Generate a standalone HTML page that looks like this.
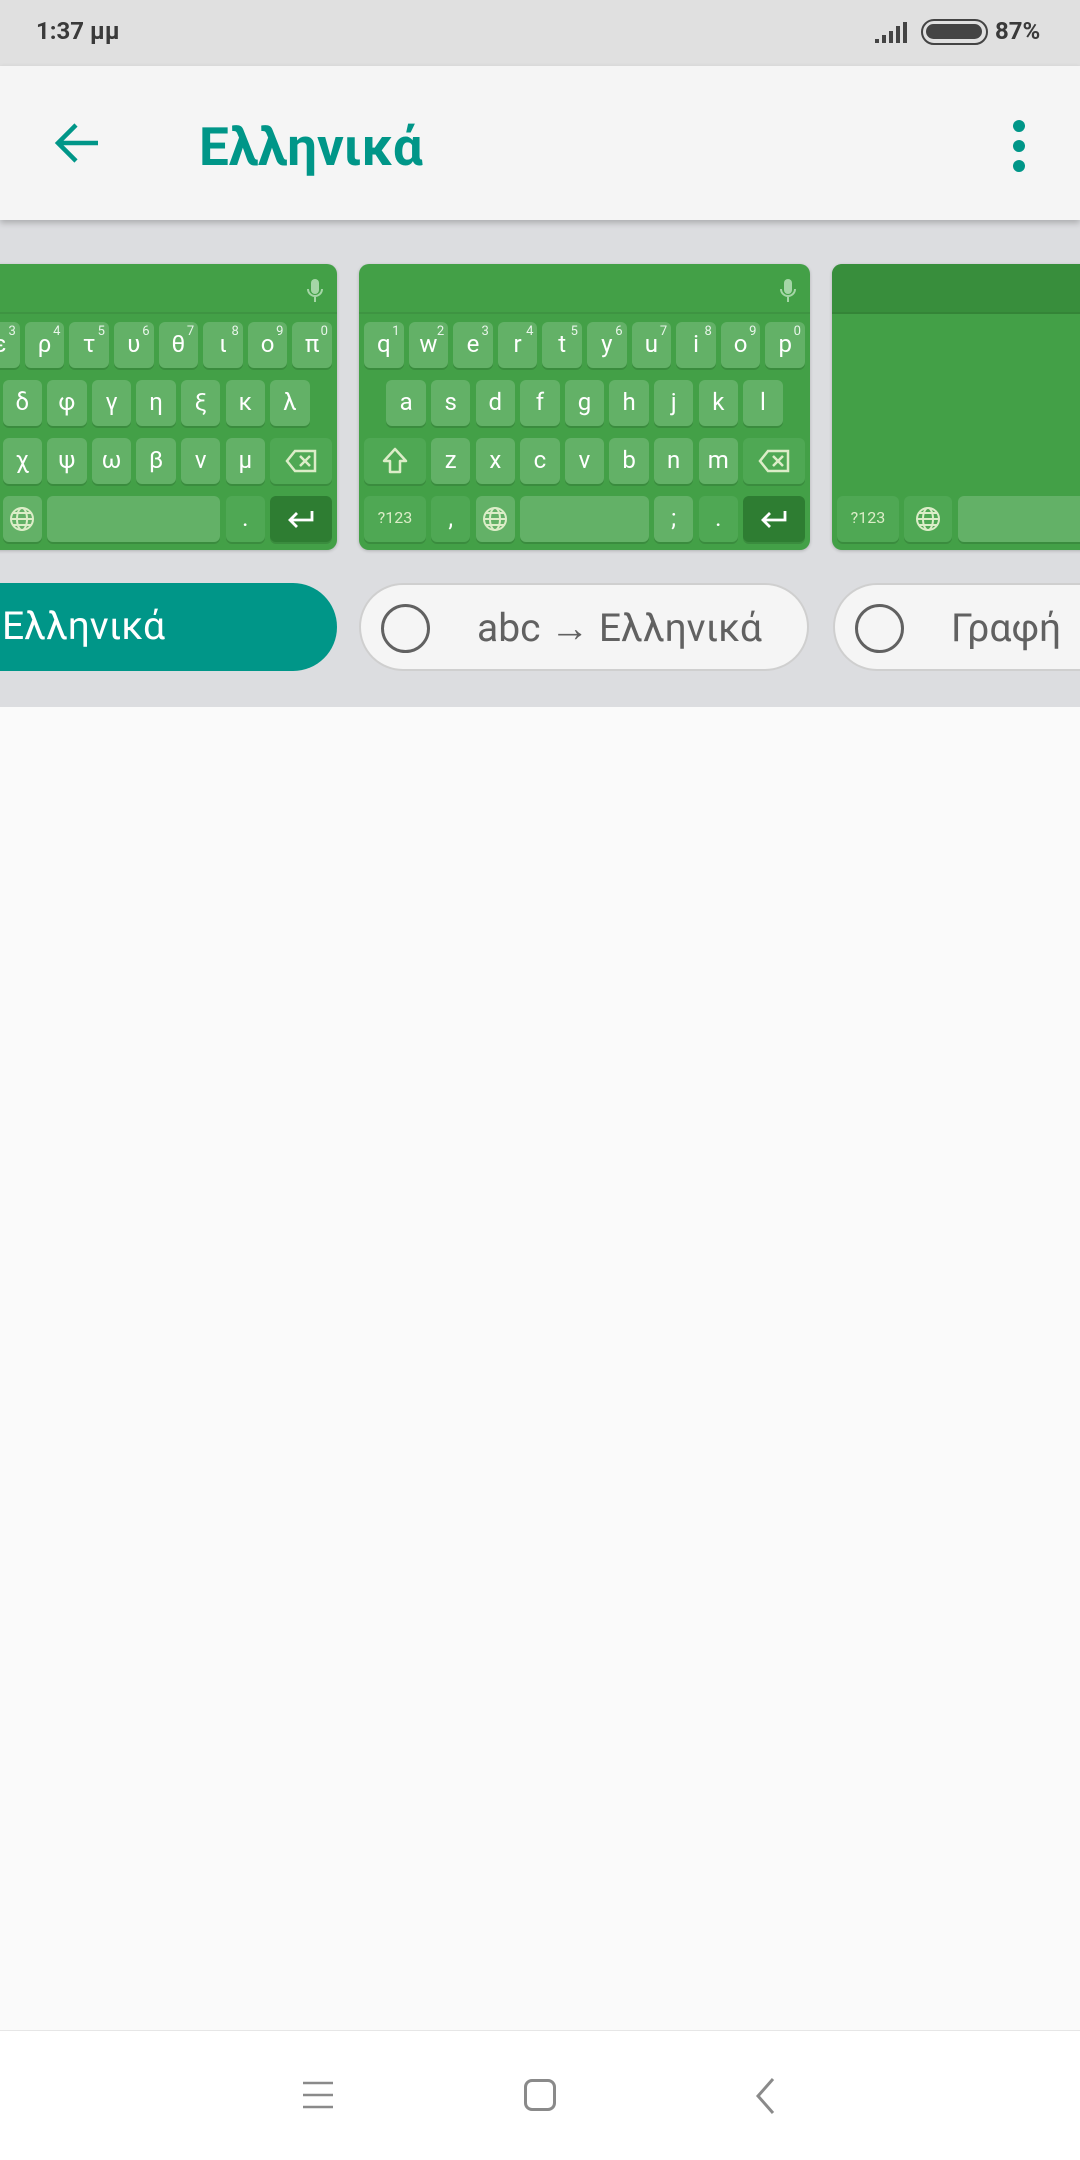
<!DOCTYPE html>
<html><head><meta charset="utf-8"><style>
*{margin:0;padding:0;box-sizing:border-box}
body{width:1080px;height:2160px;position:relative;overflow:hidden;background:#fafafa;font-family:"Roboto","Liberation Sans","DejaVu Sans",sans-serif}
.sb{position:absolute;left:0;top:0;width:1080px;height:66px;background:#e0e0e0}
.ab{position:absolute;left:0;top:66px;width:1080px;height:154px;background:#f5f5f5;box-shadow:0 3px 6px rgba(0,0,0,.22);z-index:2}
.gray{position:absolute;left:0;top:220px;width:1080px;height:487px;background:#dcdde0}
.card{position:absolute;top:264px;width:451px;height:286px;background:#43a047;border-radius:10px;overflow:hidden;box-shadow:0 1px 3px rgba(0,0,0,.2)}
.hd{position:absolute;left:0;top:0;width:100%;height:50px;border-bottom:2px solid rgba(0,0,0,.07)}
.k{position:absolute;left:calc(5px + var(--i)*44.6px);width:calc(var(--w,1)*44.6px - 5px);height:46px;border-radius:6px;background:#63b167;box-shadow:0 2px 0 rgba(0,0,0,.12);color:#fff;font-size:24px;text-align:center;line-height:44px}
.f{background:#4fa854}
.e{background:#2e7d32}
.r1{top:58px}.r2{top:116px}.r3{top:174px}.r4{top:232px}
.k sup{position:absolute;right:4px;top:-12px;font-size:13px;color:#e8f5e9}
.sm{font-size:16px;color:#dcedc8}
.chip{position:absolute;top:583px;height:88px;border-radius:44px;font-size:39px;line-height:86px;color:#616161}
.c2{background:#f5f5f5;border:2px solid #cfcfcf}
.circ{position:absolute;top:19px;width:49px;height:49px;border-radius:50%;border:3px solid #616161}
.nav{position:absolute;left:0;top:2030px;width:1080px;height:130px;background:#fff;border-top:1px solid #e6e6e6}
</style></head><body>
<div class="sb">
<div style="position:absolute;left:36px;top:17px;font-size:24px;font-weight:bold;color:#3a3a3a">1:37 μμ</div>
<svg style="position:absolute;left:874px;top:21px" width="36" height="24" viewBox="0 0 36 24"><g fill="#444"><rect x="1" y="18" width="4" height="4"/><rect x="8" y="14" width="4" height="8"/><rect x="15" y="10" width="4" height="12"/><rect x="22" y="5" width="4" height="17"/><rect x="29" y="1" width="4" height="21"/></g></svg>
<div style="position:absolute;left:921px;top:19px;width:67px;height:26px;border:2.5px solid #444;border-radius:13px"><div style="position:absolute;left:3px;top:3px;width:56px;height:15px;background:#444;border-radius:8px"></div></div>
<div style="position:absolute;left:995px;top:17px;font-size:24px;font-weight:bold;color:#3a3a3a">87%</div>
</div>
<div class="ab">
<svg style="position:absolute;left:52px;top:52px" width="50" height="50" viewBox="0 0 50 50"><path d="M46 25H8M24 7L6 25l18 18" fill="none" stroke="#009688" stroke-width="4.5"/></svg>
<div style="position:absolute;left:199px;top:50px;font-size:53px;font-weight:bold;color:#009688">Ελληνικά</div>
<div style="position:absolute;left:1013px;top:54px;width:12px;height:12px;border-radius:50%;background:#009688"></div>
<div style="position:absolute;left:1013px;top:74px;width:12px;height:12px;border-radius:50%;background:#009688"></div>
<div style="position:absolute;left:1013px;top:94px;width:12px;height:12px;border-radius:50%;background:#009688"></div>
</div>
<div class="gray"></div>

<!-- card 1 -->
<div class="card" style="left:-114px">
<div class="hd"></div>
<svg style="position:absolute;left:420px;top:14px" width="18" height="26" viewBox="0 0 18 26"><rect x="5" y="1" width="8" height="15" rx="4" fill="#a5d6a7"/><path d="M2 11a7 7 0 0 0 14 0M9 18v6" fill="none" stroke="#a5d6a7" stroke-width="2"/></svg>
<div class="k r1" style="--i:0">;<sup>1</sup></div>
<div class="k r1" style="--i:1">ς<sup>2</sup></div>
<div class="k r1" style="--i:2">ε<sup>3</sup></div>
<div class="k r1" style="--i:3">ρ<sup>4</sup></div>
<div class="k r1" style="--i:4">τ<sup>5</sup></div>
<div class="k r1" style="--i:5">υ<sup>6</sup></div>
<div class="k r1" style="--i:6">θ<sup>7</sup></div>
<div class="k r1" style="--i:7">ι<sup>8</sup></div>
<div class="k r1" style="--i:8">ο<sup>9</sup></div>
<div class="k r1" style="--i:9">π<sup>0</sup></div>
<div class="k r2" style="--i:0.5">α</div>
<div class="k r2" style="--i:1.5">σ</div>
<div class="k r2" style="--i:2.5">δ</div>
<div class="k r2" style="--i:3.5">φ</div>
<div class="k r2" style="--i:4.5">γ</div>
<div class="k r2" style="--i:5.5">η</div>
<div class="k r2" style="--i:6.5">ξ</div>
<div class="k r2" style="--i:7.5">κ</div>
<div class="k r2" style="--i:8.5">λ</div>
<div class="k r3 f" style="--i:0;--w:1.5"></div>
<div class="k r3" style="--i:1.5">ζ</div>
<div class="k r3" style="--i:2.5">χ</div>
<div class="k r3" style="--i:3.5">ψ</div>
<div class="k r3" style="--i:4.5">ω</div>
<div class="k r3" style="--i:5.5">β</div>
<div class="k r3" style="--i:6.5">ν</div>
<div class="k r3" style="--i:7.5">μ</div>
<div class="k r3 f" style="--i:8.5;--w:1.5"><svg width="32" height="24" viewBox="0 0 32 24" style="margin-top:11px"><path d="M10 2h20v20H10L2 12z" fill="none" stroke="#dcedc8" stroke-width="2.5"/><path d="M15 7l10 10M25 7L15 17" stroke="#dcedc8" stroke-width="2.5"/></svg></div>
<div class="k r4 f sm" style="--i:0;--w:1.5">?123</div>
<div class="k r4 f" style="--i:1.5">,</div>
<div class="k r4" style="--i:2.5"><svg width="26" height="26" viewBox="0 0 26 26" style="margin-top:10px"><g fill="none" stroke="#dcedc8" stroke-width="2"><circle cx="13" cy="13" r="11"/><ellipse cx="13" cy="13" rx="5" ry="11"/><path d="M2 13h22M4 7h18M4 19h18"/></g></svg></div>
<div class="k r4" style="--i:3.5;--w:4"></div>
<div class="k r4 f" style="--i:7.5">.</div>
<div class="k r4 e" style="--i:8.5;--w:1.5"><svg width="30" height="20" viewBox="0 0 30 20" style="margin-top:13px"><path d="M26 2v9H5M11 4l-7 7 7 7" fill="none" stroke="#fff" stroke-width="2.8"/></svg></div>
</div>

<!-- card 2 -->
<div class="card" style="left:359px">
<div class="hd"></div>
<svg style="position:absolute;left:420px;top:14px" width="18" height="26" viewBox="0 0 18 26"><rect x="5" y="1" width="8" height="15" rx="4" fill="#a5d6a7"/><path d="M2 11a7 7 0 0 0 14 0M9 18v6" fill="none" stroke="#a5d6a7" stroke-width="2"/></svg>
<div class="k r1" style="--i:0">q<sup>1</sup></div>
<div class="k r1" style="--i:1">w<sup>2</sup></div>
<div class="k r1" style="--i:2">e<sup>3</sup></div>
<div class="k r1" style="--i:3">r<sup>4</sup></div>
<div class="k r1" style="--i:4">t<sup>5</sup></div>
<div class="k r1" style="--i:5">y<sup>6</sup></div>
<div class="k r1" style="--i:6">u<sup>7</sup></div>
<div class="k r1" style="--i:7">i<sup>8</sup></div>
<div class="k r1" style="--i:8">o<sup>9</sup></div>
<div class="k r1" style="--i:9">p<sup>0</sup></div>
<div class="k r2" style="--i:0.5">a</div>
<div class="k r2" style="--i:1.5">s</div>
<div class="k r2" style="--i:2.5">d</div>
<div class="k r2" style="--i:3.5">f</div>
<div class="k r2" style="--i:4.5">g</div>
<div class="k r2" style="--i:5.5">h</div>
<div class="k r2" style="--i:6.5">j</div>
<div class="k r2" style="--i:7.5">k</div>
<div class="k r2" style="--i:8.5">l</div>
<div class="k r3 f" style="--i:0;--w:1.5"><svg width="26" height="28" viewBox="0 0 26 28" style="margin-top:9px"><path d="M13 2L2 14h6v11h10V14h6z" fill="none" stroke="#dcedc8" stroke-width="2.5" stroke-linejoin="round"/></svg></div>
<div class="k r3" style="--i:1.5">z</div>
<div class="k r3" style="--i:2.5">x</div>
<div class="k r3" style="--i:3.5">c</div>
<div class="k r3" style="--i:4.5">v</div>
<div class="k r3" style="--i:5.5">b</div>
<div class="k r3" style="--i:6.5">n</div>
<div class="k r3" style="--i:7.5">m</div>
<div class="k r3 f" style="--i:8.5;--w:1.5"><svg width="32" height="24" viewBox="0 0 32 24" style="margin-top:11px"><path d="M10 2h20v20H10L2 12z" fill="none" stroke="#dcedc8" stroke-width="2.5"/><path d="M15 7l10 10M25 7L15 17" stroke="#dcedc8" stroke-width="2.5"/></svg></div>
<div class="k r4 f sm" style="--i:0;--w:1.5">?123</div>
<div class="k r4 f" style="--i:1.5">,</div>
<div class="k r4" style="--i:2.5"><svg width="26" height="26" viewBox="0 0 26 26" style="margin-top:10px"><g fill="none" stroke="#dcedc8" stroke-width="2"><circle cx="13" cy="13" r="11"/><ellipse cx="13" cy="13" rx="5" ry="11"/><path d="M2 13h22M4 7h18M4 19h18"/></g></svg></div>
<div class="k r4" style="--i:3.5;--w:3"></div>
<div class="k r4" style="--i:6.5">;</div>
<div class="k r4 f" style="--i:7.5">.</div>
<div class="k r4 e" style="--i:8.5;--w:1.5"><svg width="30" height="20" viewBox="0 0 30 20" style="margin-top:13px"><path d="M26 2v9H5M11 4l-7 7 7 7" fill="none" stroke="#fff" stroke-width="2.8"/></svg></div>
</div>

<!-- card 3 -->
<div class="card" style="left:832px">
<div class="hd" style="background:#388e3c"></div>
<div class="k r4 f sm" style="--i:0;--w:1.5">?123</div>
<div class="k r4 f" style="--i:1.5;width:48px"><svg width="26" height="26" viewBox="0 0 26 26" style="margin-top:10px"><g fill="none" stroke="#dcedc8" stroke-width="2"><circle cx="13" cy="13" r="11"/><ellipse cx="13" cy="13" rx="5" ry="11"/><path d="M2 13h22M4 7h18M4 19h18"/></g></svg></div>
<div class="k r4" style="left:126px;width:320px"></div>
</div>

<!-- chips -->
<div class="chip" style="left:-120px;width:457px;background:#009688;color:#fff;padding-left:122px">Ελληνικά</div>
<div class="chip c2" style="left:359px;width:450px"><div class="circ" style="left:20px"></div><span style="position:absolute;left:116px;top:0">abc → Ελληνικά</span></div>
<div class="chip c2" style="left:833px;width:400px"><div class="circ" style="left:20px"></div><span style="position:absolute;left:116px;top:0">Γραφή</span></div>

<div class="nav">
<svg style="position:absolute;left:302px;top:49px" width="32" height="30" viewBox="0 0 32 30"><path d="M1 3h30M1 15h30M1 27h30" stroke="#8a8a8a" stroke-width="2.5"/></svg>
<div style="position:absolute;left:524px;top:48px;width:32px;height:32px;border:3px solid #8a8a8a;border-radius:8px"></div>
<svg style="position:absolute;left:754px;top:46px" width="22" height="38" viewBox="0 0 22 38"><path d="M19 2L4 19l15 17" fill="none" stroke="#8a8a8a" stroke-width="3"/></svg>
</div>
</body></html>
